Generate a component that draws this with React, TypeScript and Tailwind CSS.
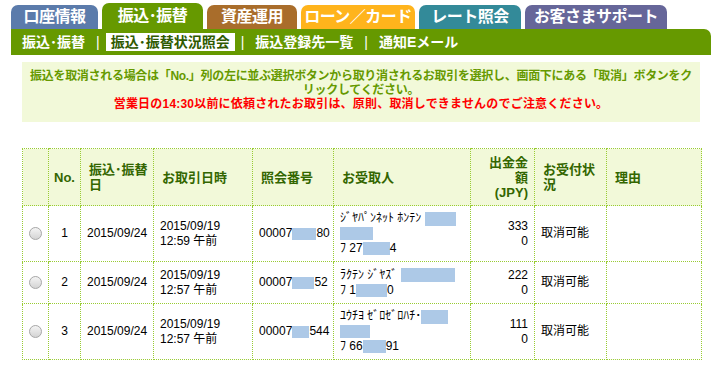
import type { ReactNode } from 'react';

const tabs = [
  { label: '口座情報', w: 'w-[87px]', bg: 'bg-[#5b7bab]' },
  { label: '振込･振替', w: 'w-[101px]', bg: 'bg-[#669900]', active: true },
  { label: '資産運用', w: 'w-[90px]', bg: 'bg-[#a96d2b]' },
  { label: 'ローン／カード', w: 'w-[114px]', bg: 'bg-[#ffb41c]' },
  { label: 'レート照会', w: 'w-[102px]', bg: 'bg-[#338a99]' },
  { label: 'お客さまサポート', w: 'w-[142px]', bg: 'bg-[#666699]' },
];

const subnav = ['振込･振替', '振込･振替状況照会', '振込登録先一覧', '通知Eメール'];

function Mask({ w, h = 'h-[13px]' }: { w: string; h?: string }) {
  return <span className={`inline-block align-middle bg-[#adc9e7] ${w} ${h}`} />;
}

function Radio() {
  return (
    <span className="block mx-auto w-[13px] h-[13px] rounded-full border border-[#a8a8a8] bg-gradient-to-b from-[#f4f4f4] to-[#d4d4d4]" />
  );
}

type Row = {
  no: number;
  time: string;
  ref: ReactNode;
  payee: ReactNode;
  amount: ReactNode;
};

const rows: Row[] = [
  {
    no: 1,
    time: '12:59 午前',
    ref: <>00007<Mask w="w-[24px]" h="h-[12px]" />80</>,
    payee: (
      <>
        ｼﾞﾔﾊﾟﾝﾈｯﾄ ﾎﾝﾃﾝ <Mask w="w-[31px]" h="h-[14px]" />
        <br />
        <Mask w="w-[33px]" />
        <br />
        ﾌ 27<Mask w="w-[27px]" />4
      </>
    ),
    amount: <>333<br />0</>,
  },
  {
    no: 2,
    time: '12:57 午前',
    ref: <>00007<Mask w="w-[22px]" h="h-[12px]" />52</>,
    payee: (
      <>
        ﾗｸﾃﾝ ｼﾞﾔｽﾞ <Mask w="w-[54px]" h="h-[14px]" />
        <br />
        ﾌ 1<Mask w="w-[31px]" />0
      </>
    ),
    amount: <>222<br />0</>,
  },
  {
    no: 3,
    time: '12:57 午前',
    ref: <>00007<Mask w="w-[17px]" h="h-[12px]" />544</>,
    payee: (
      <>
        ﾕｳﾁﾖ ｾﾞﾛｾﾞﾛﾊﾁ･<Mask w="w-[27px]" h="h-[14px]" />
        <br />
        <Mask w="w-[30px]" />
        <br />
        ﾌ 66<Mask w="w-[23px]" />91
      </>
    ),
    amount: <>111<br />0</>,
  },
];

const th = 'border border-dotted border-[#99cc33] px-[8px] align-middle font-bold text-[#336600] text-[13px] leading-[15px] whitespace-nowrap';
const td = 'border border-dotted border-[#99cc33] px-[6px] align-middle text-[12px] leading-[15px] text-black';

export default function App() {
  return (
    <div className="w-[717px] h-[365px] bg-white overflow-hidden font-['Liberation_Sans','Noto_Sans_CJK_JP',sans-serif]">
      <div className="ml-[11px] w-[700px] pt-[3px]">
        {/* tabs */}
        <div className="flex items-end gap-[4px] h-[26px]">
          {tabs.map(t => (
            <div
              key={t.label}
              className={`${t.w} ${t.bg} ${t.active ? 'h-[26px]' : 'h-[24px]'} rounded-t-[7px] flex items-center justify-center text-white font-bold text-[16px] leading-none tracking-[-0.5px]`}
            >
              {t.label}
            </div>
          ))}
        </div>

        {/* sub navigation */}
        <div className="h-[26px] bg-[#669900] rounded-tr-[7px] flex items-center pl-[6px] text-[14px] font-bold text-white leading-none">
          {subnav.map((s, i) => (
            <div key={s} className="flex items-center">
              {i > 0 && <span className="mx-[6px] font-normal">|</span>}
              <span className={i === 1 ? 'px-[5px] py-[2px] bg-white text-[#2f5a00]' : 'px-[5px] py-[2px]'}>{s}</span>
            </div>
          ))}
        </div>

        <div className="px-[11px]">
          {/* notice */}
          <div className="mt-[7px] bg-[#f2f9d9] pt-[7px] pb-[11px] text-center text-[12px] leading-[14px] font-bold">
            <p className="text-[#669900] tracking-[-0.3px]">
              振込を取消される場合は「No.」列の左に並ぶ選択ボタンから取り消されるお取引を選択し、画面下にある「取消」ボタンをク
              <br />
              リックしてください。
            </p>
            <p className="text-[#ff0000] tracking-[0.2px]">営業日の14:30以前に依頼されたお取引は、原則、取消しできませんのでご注意ください。</p>
          </div>

          {/* table */}
          <table className="mt-[26px] w-[679px] table-fixed border-collapse">
            <colgroup>
              <col className="w-[26px]" />
              <col className="w-[32px]" />
              <col className="w-[73px]" />
              <col className="w-[99px]" />
              <col className="w-[81px]" />
              <col className="w-[137px]" />
              <col className="w-[64px]" />
              <col className="w-[72px]" />
              <col className="w-[95px]" />
            </colgroup>
            <thead>
              <tr className="bg-[#f2f9d9] h-[57px]">
                <th className={th}></th>
                <th className={`${th} text-center !px-0`}>No.</th>
                <th className={`${th} text-left !pl-[8px] !pr-0`}>振込･振替<br />日</th>
                <th className={`${th} text-left`}>お取引日時</th>
                <th className={`${th} text-left`}>照会番号</th>
                <th className={`${th} text-left`}>お受取人</th>
                <th className={`${th} text-right !pr-[6px]`}>出金金<br />額<br />(JPY)</th>
                <th className={`${th} text-left`}>お受付状<br />況</th>
                <th className={`${th} text-left`}>理由</th>
              </tr>
            </thead>
            <tbody>
              {rows.map(r => (
                <tr key={r.no} className={r.no === 2 ? 'h-[42px]' : 'h-[56px]'}>
                  <td className={`${td} !px-0`}><Radio /></td>
                  <td className={`${td} text-center !px-0`}>{r.no}</td>
                  <td className={td}>2015/09/24</td>
                  <td className={td}>2015/09/19<br />{r.time}</td>
                  <td className={`${td} whitespace-nowrap`}>{r.ref}</td>
                  <td className={`${td} whitespace-nowrap`}>{r.payee}</td>
                  <td className={`${td} text-right`}>{r.amount}</td>
                  <td className={td}>取消可能</td>
                  <td className={td}></td>
                </tr>
              ))}
            </tbody>
          </table>
        </div>
      </div>
    </div>
  );
}
